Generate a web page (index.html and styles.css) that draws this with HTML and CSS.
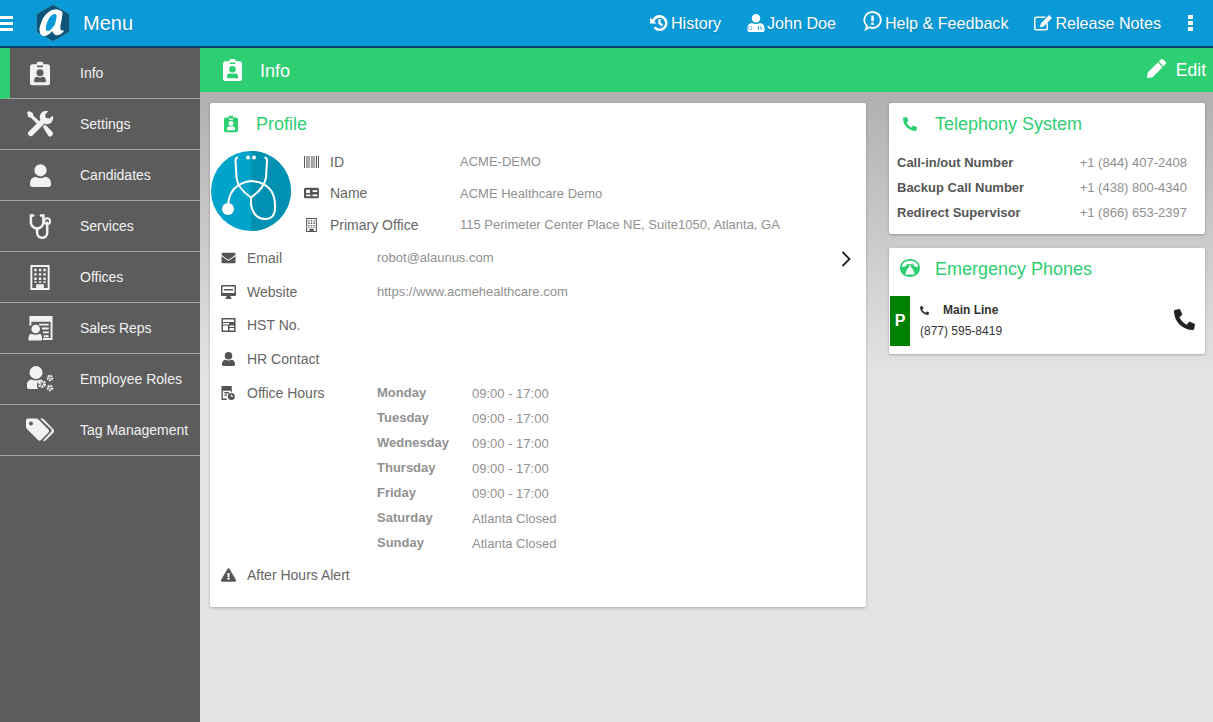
FILE: index.html
```html
<!DOCTYPE html>
<html>
<head>
    <meta charset="utf-8">
    <title>Info</title>
    <link rel="stylesheet" href="styles.css">
</head>
<body>
    <svg class="sprites" width="0" height="0">
        <symbol id="i-badge" viewBox="0 0 24 28"><path fill-rule="evenodd" d="M3 3h5V2q0-2 2-2h4q2 0 2 2v1h5q3 0 3 3v19q0 3-3 3H3q-3 0-3-3V6q0-3 3-3zM8.500 4.500v2h7v-2zM12 9a4.200 4.200 0 1 0 0 8.400A4.200 4.200 0 0 0 12 9zm-3 9q-4 .5-4 4v2.500h14V22q0-3.500-4-4-3 1.500-6 0z"/></symbol>
        <symbol id="i-tools" viewBox="0 0 28 28"><path d="M2 0l4 2 1 3 7.500 7.500-2.500 2.500L4.500 7.500l-3-1L0 2zM21 0a6 6 0 0 1 2 .3l-3.500 3.500.7 3.600 3.600.7L27.600 5a6.500 6.500 0 0 1-8.700 8.500L6 26.500a2.500 2.500 0 0 1-4-.5 2.500 2.500 0 0 1-.3-3.600L14.500 9.500A6.500 6.500 0 0 1 21 0zM17 17l2.500-2.500 7.700 7.800a2.600 2.600 0 0 1 0 3.700l-.6.600a2.600 2.600 0 0 1-3.700 0z"/></symbol>
        <symbol id="i-user" viewBox="0 0 24 26"><path d="M12 0a7 7 0 0 1 7 7 7 7 0 0 1-7 7 7 7 0 0 1-7-7 7 7 0 0 1 7-7zM6 14.500q6 3 12 0 6 1.500 6 7.500v1.500q0 2.500-3 2.500H3q-3 0-3-2.500V22q0-6 6-7.500z"/></symbol>
        <symbol id="i-steth" viewBox="0 0 24 26"><g fill="none" stroke="currentColor" stroke-width="2.600" stroke-linecap="round"><path d="M5 1.500H2.500v7a6.500 6.500 0 0 0 13 0v-7H13"/><path d="M9 15v4.500a5 5 0 0 0 10.500 0V9"/></g><circle cx="19.500" cy="7.500" r="3" fill="none" stroke="currentColor" stroke-width="2"/></symbol>
        <symbol id="i-office" viewBox="0 0 20 26"><path fill-rule="evenodd" d="M0 0h20v26H0zM2 2v22h4v-4h8v4h4V2zM4 4h2.500v2.500H4zm4.800 0h2.500v2.500H8.800zm4.700 0H16v2.500h-2.500zM4 8.500h2.500V11H4zm4.800 0h2.500V11H8.800zm4.700 0H16V11h-2.500zM4 13h2.500v2.500H4zm4.800 0h2.500v2.500H8.800zm4.700 0H16v2.500h-2.500zM4 17h2.500v1.500H4zm4.800 0h2.500v1.500H8.800zm4.700 0H16v1.500h-2.500z"/></symbol>
        <symbol id="i-reps" viewBox="0 0 25 26"><path fill-rule="evenodd" d="M1 0h24v25H15v-2h8V6H3v4H1zM11 8h10v2H11zm3 4h7v2h-7zm1 4h6v2h-6zm1 4h5v2h-5z"/><path d="M7.500 9a4.500 4.500 0 1 1 0 9 4.500 4.500 0 0 1 0-9zM3 18.500q4.500 2 9 0 2 1 2 3.500v3.500H0V22q0-2.500 3-3.500z"/></symbol>
        <symbol id="i-roles" viewBox="0 0 27 26"><path d="M9 0a6.500 6.500 0 0 1 0 13A6.500 6.500 0 0 1 9 0zM4 13.500q5 2 10 0l1 1-2 1.500-3 1v4l1 2H1.500Q0 23 0 21v-3q0-3 4-4.500z"/><g fill="none" stroke="currentColor"><circle cx="15" cy="18" r="2.500" stroke-width="3" stroke-dasharray="1.800 .8"/><circle cx="23" cy="12" r="2" stroke-width="2.500" stroke-dasharray="1.500 .7"/><circle cx="23" cy="22" r="2" stroke-width="2.500" stroke-dasharray="1.500 .7"/></g></symbol>
        <symbol id="i-tags" viewBox="0 0 28 23"><path fill-rule="evenodd" d="M2 0h8.500q1 0 2 1l10 10q1.500 1.500 0 3l-7.500 7.500q-1.500 1.500-3 0L1 10.500Q0 9.500 0 8.500V2q0-2 2-2zm3 3a2 2 0 1 0 0 4 2 2 0 0 0 0-4z"/><path d="M14 0h2q1 0 2 1l9.500 10q1.500 1.500 0 3L20 21.500q-1.500 1.500-3 .5l8-8.500q1.500-1.500 0-3z"/></symbol>
        <symbol id="i-barcode" viewBox="0 0 15 12"><path d="M0 0h1v12H0zm2 0h.6v12H2zm1.500 0h1v12h-1zm2 0h.6v12h-.6zm1.500 0h.6v12H7zm1.500 0h1v12h-1zm2 0h.6v12h-.6zm1.500 0h1v12h-1zm2 0h1v12h-1z"/></symbol>
        <symbol id="i-card" viewBox="0 0 14 10"><path fill-rule="evenodd" d="M1.500 0h11Q14 0 14 1.500v7q0 1.500-1.500 1.500h-11Q0 10 0 8.500v-7Q0 0 1.500 0zM2 2v3h3.500V2zm6 .5V4h4.500V2.500zM2 6.500V8h4V6.500zm6 0V8h4.500V6.500z"/></symbol>
        <symbol id="i-web" viewBox="0 0 15 14"><path fill-rule="evenodd" d="M1 0h13q1 0 1 1v9q0 1-1 1H9.500v1.500h1V14h-6v-1.500h1V11H1q-1 0-1-1V1q0-1 1-1zm.5 1.500V8h12V1.500zM3 4h9v1.500H3z"/></symbol>
        <symbol id="i-hst" viewBox="0 0 14 14"><path fill-rule="evenodd" d="M0 0h14v14H0zm1.500 1.500V4h11V1.500zm0 3.500v1.500h6V5zm0 2.500v5h5v-5zm6.500 0V9h4.500V7.500zm0 2.500v2.500h4.500V10z"/></symbol>
        <symbol id="i-hours" viewBox="0 0 15 15"><path fill-rule="evenodd" d="M0 0h11v6.500a4.500 4.500 0 0 0-1 .2V5H1.500v8.500H5l1 1.500H0zM3 6.500h5V8H3zM3 9h3v1.500H3zm7.500-1.500a3.700 3.700 0 1 1 0 7.500 3.700 3.700 0 0 1 0-7.500zM10 9v2.500h2.500v-1H11V9z"/></symbol>
        <symbol id="i-envelope" viewBox="0 0 512 512"><path d="M502.300 190.800c3.900-3.100 9.700-.2 9.700 4.700V400c0 26.500-21.500 48-48 48H48c-26.500 0-48-21.500-48-48V195.600c0-5 5.700-7.800 9.700-4.700 22.400 17.400 52.100 39.500 154.100 113.600 21.100 15.400 56.700 47.800 92.200 47.600 35.700.3 72-32.800 92.300-47.600 102-74.100 131.600-96.300 154-113.700zM256 320c23.200.4 56.600-29.200 73.400-41.400 132.700-96.300 142.800-104.700 173.400-128.700 5.800-4.500 9.200-11.500 9.200-18.900v-19c0-26.500-21.500-48-48-48H48C21.500 64 0 85.500 0 112v19c0 7.400 3.400 14.300 9.200 18.900 30.600 23.900 40.700 32.400 173.400 128.700 16.800 12.200 50.200 41.800 73.400 41.400z"/></symbol>
        <symbol id="i-warning" viewBox="0 0 576 512"><path d="M569.517 440.013C587.975 472.007 564.806 512 527.940 512H48.054c-36.937 0-59.999-40.055-41.577-71.987L246.423 23.985c18.467-32.009 64.720-31.951 83.154 0l239.940 416.028zM288 354c-25.405 0-46 20.595-46 46s20.595 46 46 46 46-20.595 46-46-20.595-46-46-46zm-43.673-165.346l7.418 136c.347 6.364 5.609 11.346 11.982 11.346h48.546c6.373 0 11.635-4.982 11.982-11.346l7.418-136c.375-6.874-5.098-12.654-11.982-12.654h-63.383c-6.884 0-12.356 5.780-11.981 12.654z"/></symbol>
        <symbol id="i-phone" viewBox="0 0 512 512"><path transform="matrix(-1 0 0 1 512 0)" d="M493.400 24.600l-104-24c-11.300-2.600-22.900 3.300-27.500 13.900l-48 112c-4.200 9.800-1.400 21.300 6.900 28l60.600 49.600c-36 76.700-98.900 140.500-177.200 177.200l-49.600-60.600c-6.800-8.300-18.200-11.100-28-6.900l-112 48C3.900 366.500-2 378.100.6 389.400l24 104C27.100 504.200 36.700 512 48 512c256.100 0 464-207.500 464-464 0-11.200-7.700-20.900-18.600-23.400z"/></symbol>
        <symbol id="i-pencil" viewBox="0 0 512 512"><path d="M497.900 142.100l-46.100 46.100c-4.700 4.700-12.300 4.700-17 0l-111-111c-4.700-4.700-4.700-12.300 0-17l46.100-46.100c18.700-18.700 49.100-18.700 67.900 0l60.100 60.100c18.800 18.700 18.800 49.100 0 67.900zM284.200 99.800L21.600 362.400.4 483.900c-2.900 16.400 11.400 30.600 27.800 27.800l121.500-21.300 262.600-262.600c4.700-4.700 4.700-12.300 0-17l-111-111c-4.800-4.700-12.400-4.700-17.100 0z"/></symbol>
        <symbol id="i-history" viewBox="0 0 18 18"><path fill-rule="evenodd" d="M9.500 1a8 8 0 1 1-6 13.300l2-1.700A5.400 5.400 0 1 0 4.400 7.600l2 2H0V3.500l2.300 2.300A8 8 0 0 1 9.500 1zM8.300 5h2.400v3.800l2.500 2-1.400 1.800-3.500-2.800z"/></symbol>
        <symbol id="i-doctor" viewBox="0 0 18 19"><path fill-rule="evenodd" d="M9 0a4.500 4.500 0 1 1 0 9 4.500 4.500 0 0 1 0-9zM4.500 9.500q4.500 2 9 0 4.500 1 4.500 5v3q0 1.500-1.500 1.500h-15Q0 19 0 17.500v-3q0-4 4.500-5zM3 13a2 2 0 1 0 0 4 2 2 0 0 0 0-4zm1.500 2a1.300 1.300 0 1 1-3 0 1.300 1.300 0 0 1 3 0zM11 13v4h1v-4zm2 0a2 2 0 0 1 2 2v2h-1v-2a1 1 0 0 0-1-1z"/></symbol>
        <symbol id="i-help" viewBox="0 0 19 19"><path fill-rule="evenodd" d="M10 0a8.800 8.500 0 0 1 0 17q-1.700 0-3.200-.5Q4.500 18.500 1.500 19q2-2 2.200-4.800A8.800 8.500 0 0 1 10 0zm0 1.800a6.900 6.700 0 0 0-4.500 11.800q.2 1.300-.3 2.500 1.100-.6 1.900-1.500 1.400.7 2.900.7a6.900 6.700 0 0 0 0-13.500zM8.800 4.200h2.400v5.600H8.800zm0 6.700h2.400v2.300H8.800z"/></symbol>
        <symbol id="i-notes" viewBox="0 0 18 16"><path fill-rule="evenodd" d="M2.500 1.500H12L10.500 3h-8A1 1 0 0 0 1.500 4v9a1 1 0 0 0 1 1h9a1 1 0 0 0 1-1V9L14 7.500V13a2.500 2.500 0 0 1-2.500 2.500h-9A2.500 2.500 0 0 1 0 13V4a2.500 2.500 0 0 1 2.500-2.500zM15 0l3 3-8.500 8.500-3.500.8.700-3.600z"/></symbol>
        <symbol id="i-emergency" viewBox="0 0 20 18"><path fill-rule="evenodd" d="M10 0c6 0 10 4 10 9s-4 9-10 9S0 14 0 9s4-9 10-9zm0 1.800C6 1.800 3.200 3.700 2 6.500l.6 1.800L6 7V5.500q4-1 8 0V7l3.400 1.300.6-1.800C16.800 3.700 14 1.800 10 1.800zM9.300 6v2.300a2.500 2.500 0 0 0-2 2L5 15.500h10l-2.300-5.200a2.500 2.500 0 0 0-2-2V6z"/></symbol>
    </svg>

    <header class="topbar">
        <div class="topbar-left">
            <div class="burger"><span></span><span></span><span></span></div>
            <svg class="logo" viewBox="0 0 36 38">
                <path d="M18 .5l16.500 9.500v18L18 37.500 1.500 28V10z" fill="#0c5578" stroke="#2c8fb8"/>
                <path d="M24 6q-4-2-9 1Q7 12 4.500 24q-.5 7 4 8 4 .5 9-5 1 5 6 4 4-1 6-5-2 1-3.500 0-1-1-.5-4l2-12q.5-3-3.500-4z" fill="#fff"/>
                <path d="M21 10.500q1 .5.500 3l-1.500 7q-4 6-7 6.500-3 0-2-5 2-8 6-11 2.500-1.500 4-.5z" fill="#0a9ad7"/>
            </svg>
            <span class="brand">Menu</span>
        </div>
        <nav class="topnav">
            <a class="topnav-link"><svg class="nav-icon"><use href="#i-history"/></svg>History</a>
            <a class="topnav-link"><svg class="nav-icon doctor"><use href="#i-doctor"/></svg>John Doe</a>
            <a class="topnav-link"><svg class="nav-icon help"><use href="#i-help"/></svg>Help &amp; Feedback</a>
            <a class="topnav-link"><svg class="nav-icon"><use href="#i-notes"/></svg>Release Notes</a>
            <div class="kebab"><span></span><span></span><span></span></div>
        </nav>
    </header>

    <div class="layout">
        <aside class="sidebar">
            <a class="side-item active"><span class="side-icon"><svg class="w20"><use href="#i-badge"/></svg></span>Info</a>
            <a class="side-item"><span class="side-icon"><svg class="w28"><use href="#i-tools"/></svg></span>Settings</a>
            <a class="side-item"><span class="side-icon"><svg class="w22"><use href="#i-user"/></svg></span>Candidates</a>
            <a class="side-item"><span class="side-icon"><svg class="w24"><use href="#i-steth"/></svg></span>Services</a>
            <a class="side-item"><span class="side-icon"><svg class="w20"><use href="#i-office"/></svg></span>Offices</a>
            <a class="side-item"><span class="side-icon"><svg class="w25"><use href="#i-reps"/></svg></span>Sales Reps</a>
            <a class="side-item"><span class="side-icon"><svg class="w27"><use href="#i-roles"/></svg></span>Employee Roles</a>
            <a class="side-item"><span class="side-icon"><svg class="w28"><use href="#i-tags"/></svg></span>Tag Management</a>
        </aside>

        <main class="content">
            <div class="page-title">
                <div class="page-name"><svg class="page-icon"><use href="#i-badge"/></svg><span class="page-text">Info</span></div>
                <a class="edit"><svg class="edit-icon"><use href="#i-pencil"/></svg><span class="edit-text">Edit</span></a>
            </div>

            <div class="panels">
                <section class="card profile">
                    <h2 class="card-title"><svg class="title-icon"><use href="#i-badge"/></svg>Profile</h2>
                    <svg class="chevron" viewBox="0 0 10 16"><path d="M1.500 1l7 7-7 7" fill="none" stroke="#222" stroke-width="1.800"/></svg>

                    <div class="profile-top">
                        <svg class="avatar" viewBox="0 0 80 80">
                            <circle cx="40" cy="40" r="40" fill="#00a3c9"/>
                            <path d="M40 0a40 40 0 0 1 0 80z" fill="#0090b2"/>
                            <g fill="none" stroke="#fff" stroke-width="2">
                                <path d="M27 6.500q-2.500 0-2.500 3l1 17q1 11 14.500 20 13-9 15-20l1-17q0-3-2.500-3"/>
                                <path d="M17 57q0-24 23-27 25 2 24 27 0 11-10 11-11 0-14-14V46"/>
                            </g>
                            <circle cx="17" cy="58" r="6" fill="#fff"/>
                            <circle cx="37" cy="6.500" r="2" fill="#fff"/>
                            <circle cx="43" cy="6.500" r="2" fill="#fff"/>
                        </svg>
                        <div class="top-rows">
                            <div class="row r-top"><svg class="row-icon"><use href="#i-barcode"/></svg><span class="label">ID</span><span class="value">ACME-DEMO</span></div>
                            <div class="row r-top"><svg class="row-icon"><use href="#i-card"/></svg><span class="label">Name</span><span class="value">ACME Healthcare Demo</span></div>
                            <div class="row r-top"><svg class="row-icon"><use href="#i-office"/></svg><span class="label">Primary Office</span><span class="value">115 Perimeter Center Place NE, Suite1050, Atlanta, GA</span></div>
                        </div>
                    </div>

                    <div class="rows">
                        <div class="row r-main"><svg class="row-icon"><use href="#i-envelope"/></svg><span class="label">Email</span><span class="value">robot@alaunus.com</span></div>
                        <div class="row r-main"><svg class="row-icon"><use href="#i-web"/></svg><span class="label">Website</span><span class="value">https://www.acmehealthcare.com</span></div>
                        <div class="row r-main"><svg class="row-icon"><use href="#i-hst"/></svg><span class="label">HST No.</span></div>
                        <div class="row r-main"><svg class="row-icon"><use href="#i-user"/></svg><span class="label">HR Contact</span></div>
                        <div class="row r-hours">
                            <svg class="row-icon"><use href="#i-hours"/></svg><span class="label">Office Hours</span>
                            <div class="hours">
                                <b>Monday</b><span>09:00 - 17:00</span>
                                <b>Tuesday</b><span>09:00 - 17:00</span>
                                <b>Wednesday</b><span>09:00 - 17:00</span>
                                <b>Thursday</b><span>09:00 - 17:00</span>
                                <b>Friday</b><span>09:00 - 17:00</span>
                                <b>Saturday</b><span>Atlanta Closed</span>
                                <b>Sunday</b><span>Atlanta Closed</span>
                            </div>
                        </div>
                        <div class="row r-main"><svg class="row-icon"><use href="#i-warning"/></svg><span class="label">After Hours Alert</span></div>
                    </div>
                </section>

                <div class="side-cards">
                    <section class="card telephony">
                        <h2 class="card-title"><svg class="title-icon"><use href="#i-phone"/></svg>Telephony System</h2>
                        <div class="tel-row"><b>Call-in/out Number</b><span>+1 (844) 407-2408</span></div>
                        <div class="tel-row"><b>Backup Call Number</b><span>+1 (438) 800-4340</span></div>
                        <div class="tel-row"><b>Redirect Supervisor</b><span>+1 (866) 653-2397</span></div>
                    </section>
                    <section class="card emergency">
                        <h2 class="card-title"><svg class="title-icon wide"><use href="#i-emergency"/></svg>Emergency Phones</h2>
                        <div class="phone-line">
                            <div class="tag">P</div>
                            <div class="phone-text">
                                <div class="phone-name"><svg class="mini-phone"><use href="#i-phone"/></svg>Main Line</div>
                                <div class="phone-number">(877) 595-8419</div>
                            </div>
                            <svg class="call"><use href="#i-phone"/></svg>
                        </div>
                    </section>
                </div>
            </div>
        </main>
    </div>
</body>
</html>
```

FILE: styles.css
```css
* {
    box-sizing: border-box;
}

html, body {
    height: 100%;
}

body {
    margin: 0;
    display: flex;
    flex-direction: column;
    overflow: hidden;
    background-color: #e3e3e3;
    font-family: 'Liberation Sans', Arial, sans-serif;
}

.sprites {
    display: none;
}

svg {
    fill: currentColor;
    flex: none;
}

/* top bar */
.topbar {
    height: 48px;
    flex: none;
    display: flex;
    align-items: center;
    justify-content: space-between;
    background: #0a9ad7;
    border-bottom: 2px solid #0d3f6e;
    color: #fff;
    text-shadow: 0 1px 1px rgba(0, 0, 0, 0.2);
}

.topbar-left {
    display: flex;
    align-items: center;
}

.burger {
    width: 13px;
    display: flex;
    flex-direction: column;
    gap: 3px;
}

.burger span {
    height: 3px;
    background: #fff;
}

.logo {
    width: 36px;
    height: 38px;
    margin-left: 22px;
}

.brand {
    margin-left: 12px;
    font-size: 20px;
}

.topnav {
    display: flex;
    align-items: center;
    height: 100%;
}

.topnav-link {
    display: flex;
    align-items: center;
    margin-right: 26px;
    font-size: 16.100px;
}

.nav-icon {
    width: 18px;
    height: 18px;
    margin-right: 3px;
}

.nav-icon.doctor {
    margin-right: 2px;
}

.nav-icon.help {
    width: 20px;
    height: 20px;
    margin-top: -4px;
}

.kebab {
    display: flex;
    flex-direction: column;
    gap: 2px;
    width: 5px;
    margin-right: 20px;
    margin-left: 1px;
}

.kebab span {
    height: 4px;
    background: #fff;
}

/* sidebar */
.layout {
    flex: 1;
    display: flex;
    min-height: 0;
}

.sidebar {
    width: 200px;
    flex: none;
    background: #5c5c5c;
}

.side-item {
    height: 51px;
    display: flex;
    align-items: center;
    border-bottom: 1px solid #a5a5a5;
    color: #f2f2f2;
    font-size: 14px;
}

.side-item.active {
    border-left: 10px solid #2ecf72;
}

.side-item.active .side-icon {
    width: 70px;
    padding-right: 10px;
}

.side-icon {
    width: 80px;
    display: flex;
    justify-content: center;
    flex: none;
}

.w20 { width: 20px; height: 25px; }
.w22 { width: 21px; height: 23px; }
.w24 { width: 24px; height: 25px; }
.w25 { width: 25px; height: 25px; }
.w27 { width: 27px; height: 26px; }
.w28 { width: 28px; height: 26px; }

/* page title */
.content {
    flex: 1;
    min-width: 0;
    background: linear-gradient(#b0b0b0 44px, #c9c9c9 184px, #e3e3e3 324px);
}

.page-title {
    height: 44px;
    display: flex;
    align-items: center;
    justify-content: space-between;
    background: #2ecf72;
    color: #fff;
}

.page-name {
    display: flex;
    align-items: center;
    font-size: 18px;
    padding-left: 23px;
}

.page-icon {
    width: 19px;
    height: 24px;
    margin-right: 18px;
}

.page-text {
    padding-top: 2px;
}

.edit {
    display: flex;
    align-items: center;
    font-size: 17.500px;
    margin-right: 7px;
}

.edit-icon {
    width: 19px;
    height: 19px;
    margin-right: 10px;
    margin-top: -4px;
}

.edit-text {
    padding-top: 1px;
}

/* panels */
.panels {
    display: flex;
    align-items: flex-start;
    gap: 23px;
    padding: 11px 8px 0 10px;
}

.card {
    position: relative;
    background: #fff;
    border-radius: 2px;
    box-shadow: 0 1px 3px rgba(0, 0, 0, 0.25);
}

.card-title {
    margin: 0;
    height: 42px;
    display: flex;
    align-items: center;
    color: #2ecf72;
    font-size: 18px;
    font-weight: normal;
}

.title-icon {
    width: 14px;
    height: 18px;
    margin: 0 18px 0 14px;
}

.title-icon.wide {
    width: 20px;
    height: 18px;
    margin: -3px 15px 0 11px;
}

.profile {
    width: 656px;
    height: 504px;
}

.chevron {
    position: absolute;
    top: 148px;
    right: 14px;
    width: 12px;
    height: 16px;
}

.profile-top {
    display: flex;
    height: 88px;
}

.avatar {
    width: 80px;
    height: 80px;
    margin-left: 1px;
    margin-top: 6px;
}

.top-rows {
    padding: 1px 0 0 13px;
}

.row {
    display: flex;
    color: #666;
    font-size: 14px;
}

.r-top {
    height: 31.500px;
    align-items: center;
}

.r-main {
    height: 33.750px;
    align-items: center;
    padding-left: 11px;
}

.row-icon {
    width: 15px;
    height: 14px;
    color: #555;
}

.label {
    width: 130px;
    margin-left: 11px;
}

.value {
    color: #909090;
    font-size: 13px;
}

.rows {
    padding-top: 8px;
}

.r-hours {
    height: 182px;
    padding-left: 11px;
    align-items: flex-start;
    padding-top: 9px;
}

.r-hours .row-icon {
    margin-top: 1px;
}

.hours {
    display: grid;
    grid-template-columns: 95px auto;
    grid-auto-rows: 25px;
    font-size: 13px;
    color: #919191;
}

.hours b {
    line-height: 16px;
}

.hours span {
    line-height: 18px;
}

.side-cards {
    width: 316px;
    display: flex;
    flex-direction: column;
    gap: 14px;
}

.telephony {
    height: 131px;
}

.tel-row {
    height: 25px;
    display: flex;
    align-items: center;
    justify-content: space-between;
    padding: 0 18px 0 8px;
    font-size: 13px;
    color: #909090;
}

.tel-row b {
    color: #555;
}

.telephony .card-title {
    margin-bottom: 5px;
}

.emergency {
    height: 106px;
}

.phone-line {
    display: flex;
    align-items: center;
    height: 50px;
    padding-left: 1px;
    margin-top: 6px;
}

.tag {
    width: 20px;
    height: 50px;
    display: flex;
    align-items: center;
    justify-content: center;
    background: #008000;
    color: #fff;
    font-size: 16px;
    font-weight: bold;
}

.phone-text {
    flex: 1;
    padding-left: 10px;
    padding-bottom: 2px;
    font-size: 12px;
    color: #333;
}

.phone-name {
    display: flex;
    align-items: center;
    font-weight: bold;
    height: 22px;
}

.mini-phone {
    width: 9px;
    height: 9px;
    margin-right: 14px;
}

.phone-number {
    height: 20px;
    line-height: 20px;
}

.call {
    width: 21px;
    height: 21px;
    margin-right: 10px;
    margin-bottom: 4px;
    color: #222;
}
```
